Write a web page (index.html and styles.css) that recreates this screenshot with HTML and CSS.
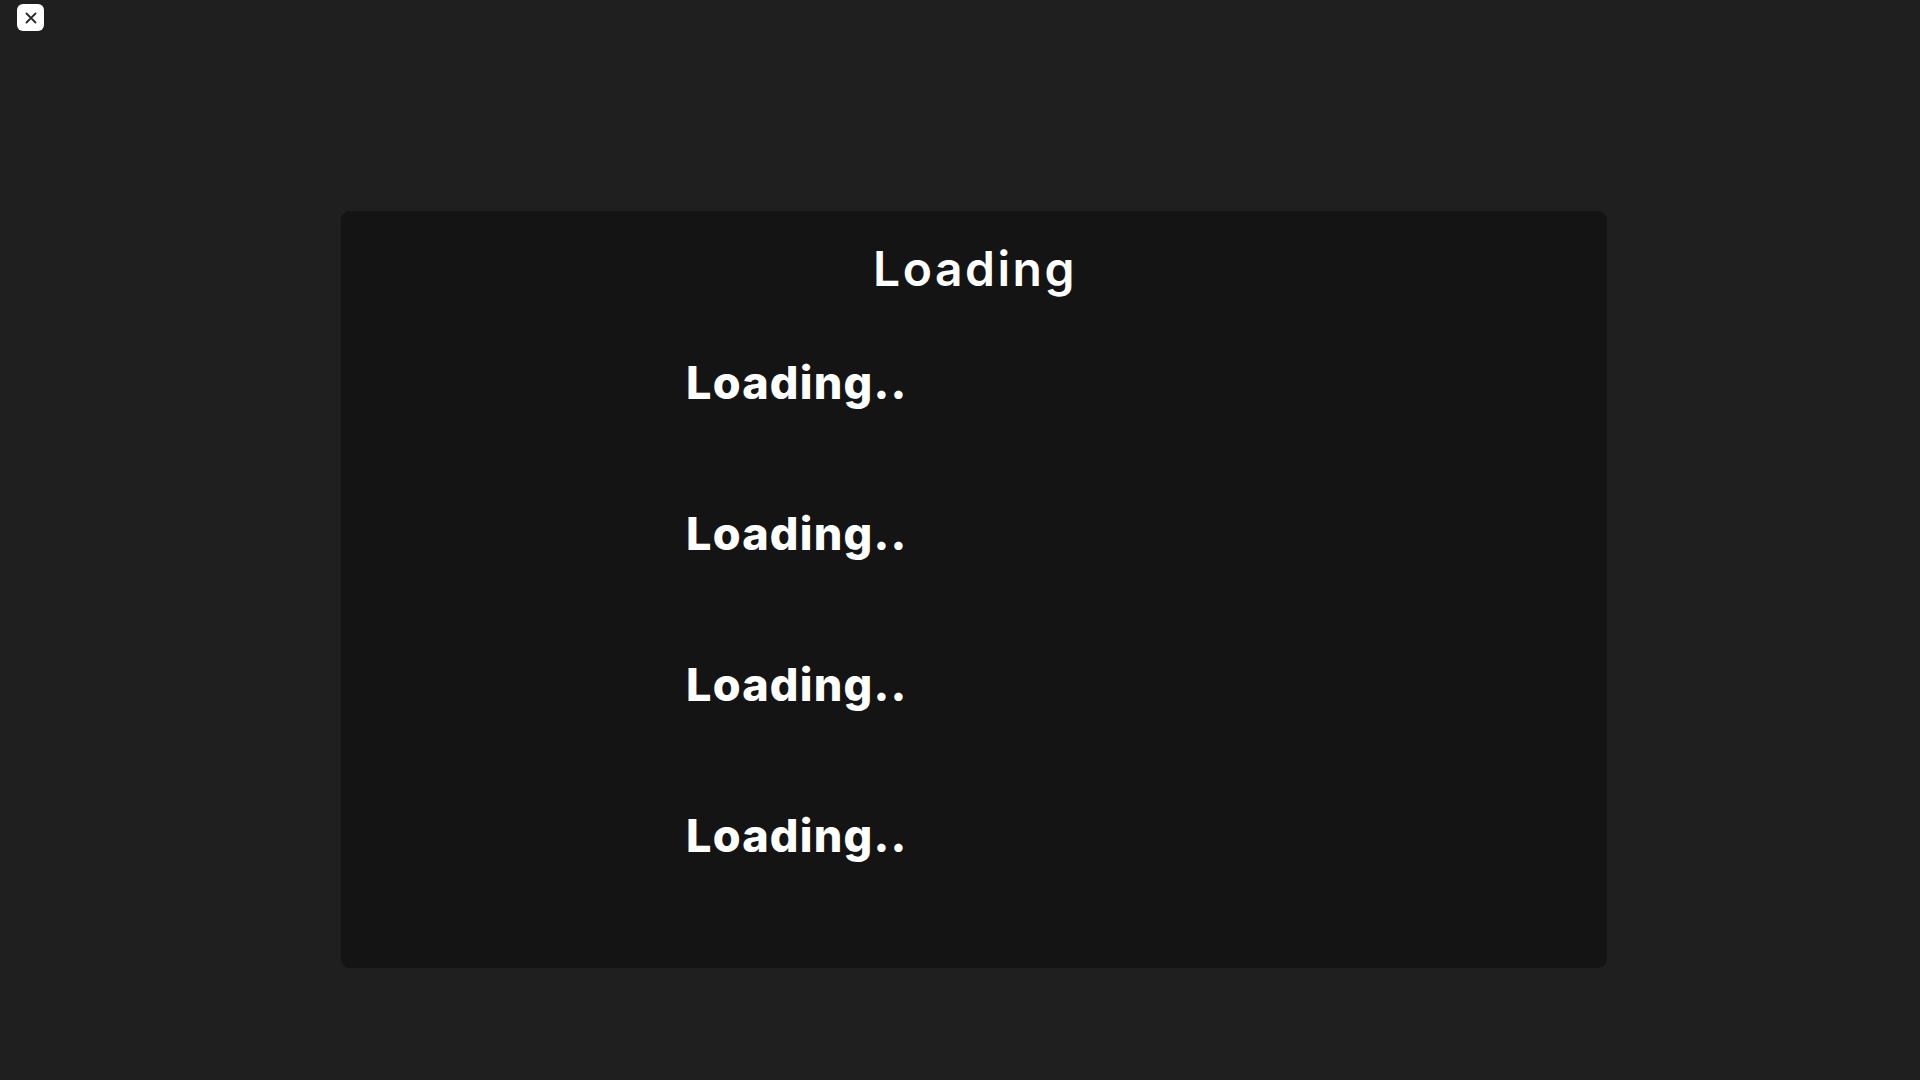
FILE: index.html
```html
<!DOCTYPE html>
<html lang="en">
<head>
    <meta charset="UTF-8">
    <meta name="viewport" content="width=device-width, initial-scale=1.0">
    <title>Loading</title>
    <link rel="stylesheet" href="styles.css">
</head>
<body>
    <button class="close-btn" aria-label="Close">
        <svg width="12" height="12" viewBox="0 0 12 12">
            <path d="M1.5 1.5 L10.5 10.5 M10.5 1.5 L1.5 10.5" stroke="#2a2a2a" stroke-width="1.8" stroke-linecap="round"/>
        </svg>
    </button>
    <div class="panel">
        <h1 class="panel-title">Loading</h1>
        <div class="item-list">
            <div class="item">Loading..</div>
            <div class="item">Loading..</div>
            <div class="item">Loading..</div>
            <div class="item">Loading..</div>
        </div>
    </div>
</body>
</html>
```

FILE: styles.css
```css
html, body {
    margin: 0;
    height: 100%;
    background-color: #1f1f1f;
    font-family: Inter, 'Noto Sans', sans-serif;
    color: #fff;
    overflow: hidden;
}
.close-btn {
    position: absolute; /* flota sobre la pagina */
    top: 4px;
    left: 17px;
    width: 27px;
    height: 27px;
    padding: 0;
    border: none;
    border-radius: 6px;
    background-color: #fff;
    display: flex;
    justify-content: center;
    align-items: center;
    cursor: pointer;
}
.panel {
    box-sizing: border-box;
    width: 1266px;
    height: 757px;
    margin: 211px 0 0 341px;
    padding-top: 34px;
    background-color: #141414;
    border-radius: 9px;
    display: flex;
    flex-direction: column;
    align-items: center;
}
.panel-title {
    margin: 0;
    font-size: 48px;
    line-height: 48px;
    font-weight: 600;
    letter-spacing: 2.5px;
    padding-left: 2px;
}
.item-list {
    align-self: stretch;
    display: flex;
    flex-direction: column;
    gap: 106px;
    margin-top: 67px;
    padding-left: 345px;
}
.item {
    font-size: 45px;
    line-height: 45px;
    font-weight: 800;
    letter-spacing: 1.2px;
}
```
